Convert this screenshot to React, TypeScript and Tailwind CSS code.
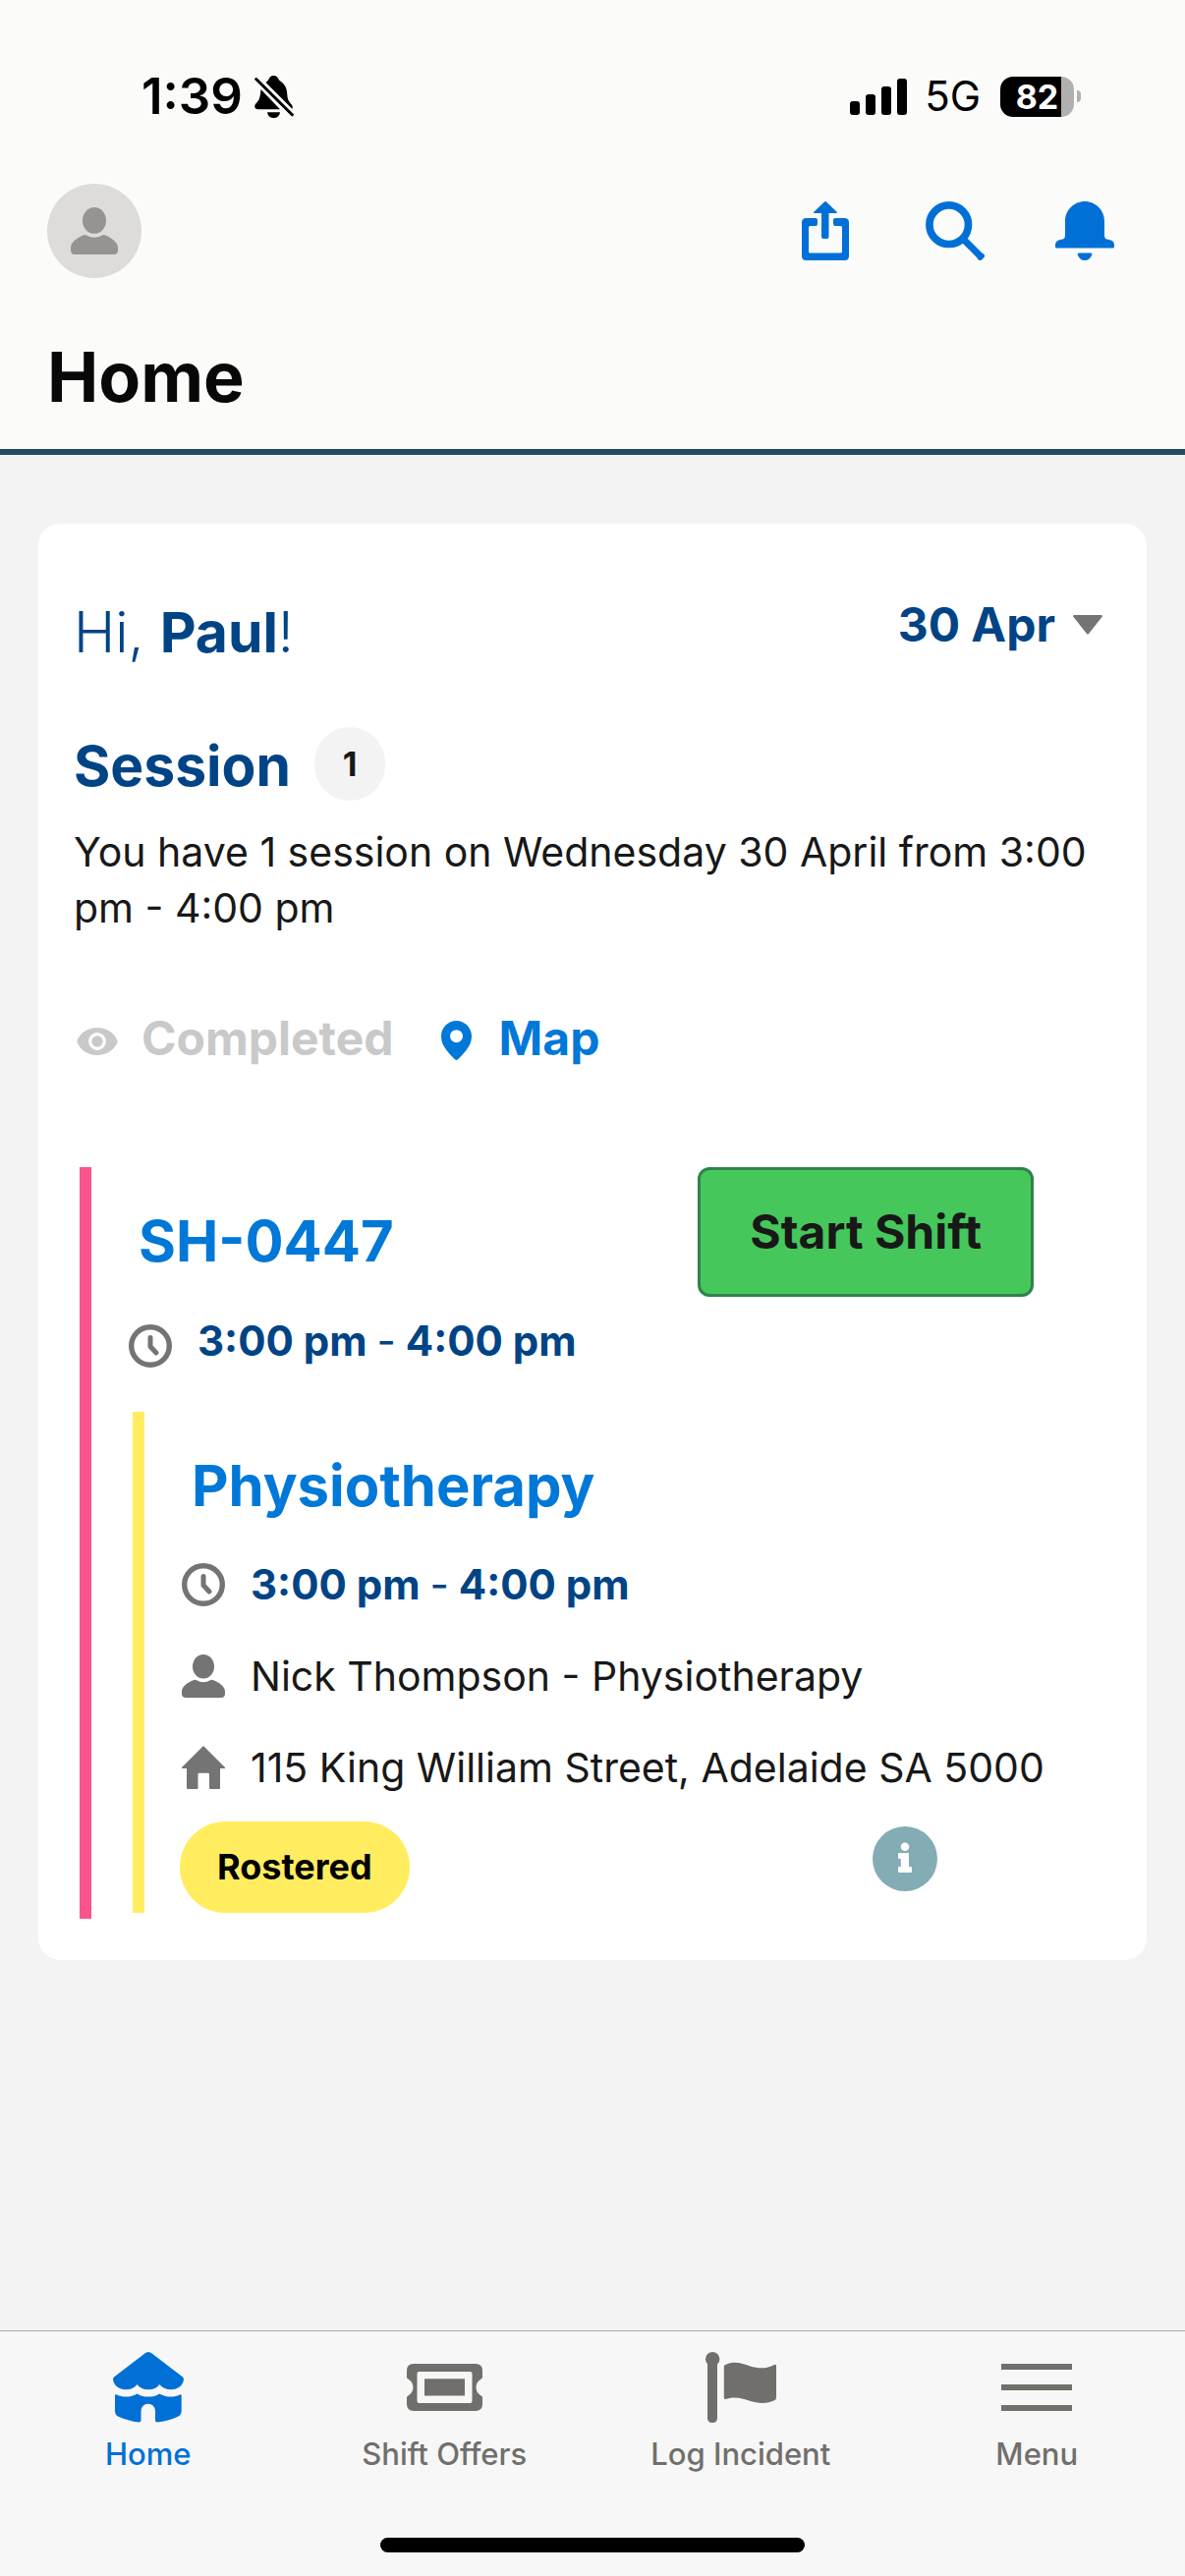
import React, { useState } from 'react';

const detailClass = 'text-[41px] leading-11 text-[#181818]';
const timeClass = 'text-[42px] font-bold text-[#014486]';
const linkTitleClass = 'text-[58px] leading-19 font-bold text-[#0078d8]';

type IconProps = { className?: string };

const BellOffIcon = () => (
  <svg viewBox="0 0 40 43" className="h-[43px] w-10" fill="currentColor">
    <path d="M11.5 7C13 5.5 14 5.2 14.6 3.6C15.3 1.2 17 0 19.5 0S23.700 1.200 24.500 3.600C25 5 26 5.300 27.500 6.500C32 10 33 14 33.300 19C33.600 24 34.500 25.500 36.500 28C38.500 30.300 39.500 32 38.300 33.800Z" />
    <path d="M6.500 14L26 34.200H3.500C0 34.200 -0.800 30.500 1.500 28.300C5 25 5.800 22 6.500 14Z" />
    <path d="M13 37.200H26C25.500 41 23 43 19.500 43S13.500 41 13 37.200Z" />
    <path d="M1.700 3.500L38.300 39.800" stroke="currentColor" strokeWidth="3" strokeLinecap="round" />
  </svg>
);

const SignalIcon = () => (
  <svg viewBox="0 0 58 37" className="h-[37px] w-[58px]" fill="currentColor">
    <rect x="0" y="23" width="10" height="14" rx="3" />
    <rect x="16" y="16" width="10" height="21" rx="3" />
    <rect x="32" y="8" width="10" height="29" rx="3" />
    <rect x="48" y="0" width="10" height="37" rx="3" />
  </svg>
);

const PersonIcon: React.FC<IconProps> = ({ className }) => (
  <svg viewBox="0 0 48 48" className={className} fill="currentColor">
    <ellipse cx="24" cy="13.400" rx="12" ry="13.400" />
    <path d="M13.500 28.300Q15 27.600 16.500 28.700Q24 33 31.500 28.700Q33 27.600 34.500 28.300C42 31 48 36 48 41V43.500Q48 48 43.500 48H4.500Q0 48 0 43.500V41C0 36 6 31 13.500 28.300Z" />
  </svg>
);

const ShareIcon = () => (
  <svg viewBox="-6 0 60 60" className="size-15" fill="currentColor">
    <path d="M4.500 17H14Q16 17 16 19V22.500Q16 25 14 25H8.500Q7 25 7 26.500V51Q7 52.500 8.500 52.500H39.500Q41 52.500 41 51V26.500Q41 25 39.500 25H34Q32 25 32 22.500V19Q32 17 34 17H43.500Q48 17 48 21.500V55.500Q48 60 43.500 60H4.500Q0 60 0 55.500V21.500Q0 17 4.500 17Z" />
    <path d="M23 0.500Q24 -0.500 25 0.500L35.500 10.500Q36.500 12 35 12H27.500V36Q27.500 38 25.500 38H22Q20 38 20 36V12H13Q11.500 12 12.500 10.500Z" />
  </svg>
);

const SearchIcon = () => (
  <svg viewBox="0 0 60 60" className="size-15" fill="none" stroke="currentColor">
    <circle cx="23.700" cy="23.700" r="19.800" strokeWidth="7.700" />
    <path d="M38 38L57 57" strokeWidth="7" />
    <path d="M55.500 57.500L57.500 55.500" strokeWidth="5" strokeLinecap="round" />
  </svg>
);

const BellIcon = () => (
  <svg viewBox="0 0 60 60" className="size-15" fill="currentColor">
    <path d="M30 0C41 0 50 9 50 20V34.500Q50 38.700 54 38.700Q60 39.500 60 44.500V46Q60 47.500 58.500 47.500H1.500Q0 47.500 0 46V44.500Q0 39.500 6 38.700Q10 38.700 10 34.500V20C10 9 19 0 30 0Z" />
    <path d="M24 52.500H36Q37.800 52.500 37.200 54.500C36 58 33.500 60 30 60S24 58 22.800 54.500Q22.200 52.500 24 52.500Z" />
  </svg>
);

const EyeIcon = () => (
  <svg viewBox="0 -10 42 42" className="size-[42px]">
    <path fill="currentColor" d="M0.500 13C4 5 11.500 0 21 0S38 5 41.500 13Q42 14 41.500 15C38 23 30.500 28 21 28S4 23 0.500 15Q0 14 0.500 13Z" />
    <circle cx="21" cy="14" r="7.300" fill="none" stroke="#fff" strokeWidth="3.200" />
  </svg>
);

const PinIcon = () => (
  <svg viewBox="0 -4 31 44" className="h-11 w-[31px]" fill="currentColor">
    <path fillRule="evenodd" d="M15.500 0C24 0 31 7 31 15.700C31 26 23 33 17 39.300Q15.500 40.700 14 39.300C8 33 0 26 0 15.700C0 7 7 0 15.500 0ZM15.500 9.200A6.500 6.500 0 1 0 15.500 22.200A6.500 6.500 0 1 0 15.500 9.200Z" />
  </svg>
);

const ClockIcon: React.FC<IconProps> = ({ className }) => (
  <svg viewBox="0 0 44 44" className={className} fill="none" stroke="currentColor">
    <circle cx="22" cy="22" r="19.300" strokeWidth="5.400" />
    <path d="M22 13.500V22.500L28 29" strokeWidth="5" strokeLinecap="round" strokeLinejoin="round" />
  </svg>
);

const HouseIcon: React.FC<IconProps> = ({ className }) => (
  <svg viewBox="0 0 44 44" className={className} fill="currentColor">
    <path d="M22 0L44 22V23H39V43Q39 44 38 44H29Q28 44 28 43V28.500Q28 27.700 27 27.700H17.500Q16.500 27.700 16.500 28.500V43Q16.500 44 15.500 44H6Q5 44 5 43V23H0V22Z" />
  </svg>
);

const InfoIcon = () => (
  <svg viewBox="0 0 66 66" className="size-[66px]">
    <circle cx="33" cy="33" r="33" fill="#83acb4" />
    <circle cx="33" cy="20.700" r="4.300" fill="#fff" />
    <path fill="#fff" d="M27 27H36Q37 27 37 28V41H39Q40 41 40 42V46Q40 47 39 47H27Q26 47 26 46V42Q26 41 27 41H28.800V33H27Q26 33 26 32V28Q26 27 27 27Z" />
  </svg>
);

const HomeTabIcon = () => (
  <svg viewBox="0 0 72 72" className="size-18" fill="currentColor">
    <path d="M32 1.800Q36 -1.600 40 1.800L71 25.500Q72 26.500 72 28C71 34 66 38.300 59.500 38.300C54.500 38.300 50 36.500 47.300 33C45 36.500 41 38.300 36 38.300C31 38.300 27 36.500 24.600 33C22 36.500 18 38.300 13 38.300C6 38.300 1 34 0 28Q0 26.500 1 25.500Z" />
    <path d="M2 44Q2 42.800 4 43.500C7 45 10 45.600 13 45.600C17.500 45.600 21.500 44.500 24.600 42.500C28 44.800 32 45.600 36 45.600C40 45.600 44 44.800 47.300 42.500C50.500 44.500 55 45.600 59 45.600C62 45.600 65 45 68 43.500Q69.700 42.800 69.700 44V60Q69.700 64 66 65.700Q56 70.500 45 71.500Q43 71.500 43 69.500V60A7.250 7.250 0 0 0 28.500 60V69.500Q28.500 71.500 26.500 71.500Q15 70 5.500 65.700Q2 64 2 60Z" />
  </svg>
);

const TicketIcon = () => (
  <svg viewBox="0 0 77 72" className="h-18 w-[77px]" fill="currentColor">
    <path fillRule="evenodd" d="M7 12H70Q77 12 77 19V25.500Q77 26.700 76 27.300C68.700 31 68.700 41 76 44.700Q77 45.300 77 46.500V53Q77 60 70 60H7Q0 60 0 53V46.500Q0 45.300 1 44.700C8.300 41 8.300 31 1 27.300Q0 26.700 0 25.500V19Q0 12 7 12ZM12.500 20Q10.500 20 10.500 22V50Q10.500 52 12.500 52H64.500Q66.500 52 66.500 50V22Q66.500 20 64.500 20Z" />
    <rect x="18" y="27.300" width="41" height="17.200" rx="0.500" />
  </svg>
);

const FlagIcon = () => (
  <svg viewBox="0 0 72 72" className="size-18" fill="currentColor">
    <circle cx="7.200" cy="7.200" r="7.200" />
    <rect x="2" y="7" width="10" height="65" rx="4.500" />
    <path d="M18.800 15Q18.800 13.500 20 13C30 8.500 38 12 45 14.200C54 17 62 17.500 70 13Q72 12 72 14V46.500Q72 48 71 48.800C62 54 52 52 45 49.800C37 47 30 45 21 48Q18.800 48.300 18.800 46.500Z" />
  </svg>
);

const MenuIcon = () => (
  <svg viewBox="0 0 72 72" className="size-18" fill="currentColor">
    <rect y="12" width="72" height="6" />
    <rect y="33" width="72" height="6" />
    <rect y="54" width="72" height="6" />
  </svg>
);

const tabs = [
  { label: 'Home', icon: <HomeTabIcon /> },
  { label: 'Shift Offers', icon: <TicketIcon /> },
  { label: 'Log Incident', icon: <FlagIcon /> },
  { label: 'Menu', icon: <MenuIcon /> },
];

const StatusBar = () => (
  <div className="flex h-32 items-center justify-between pt-17 pr-[106px] pl-36 text-black">
    <div className="flex items-center gap-3">
      <span className="text-[51px] leading-15 font-semibold">1:39</span>
      <BellOffIcon />
    </div>
    <div className="flex items-center">
      <SignalIcon />
      <span className="ml-[18px] text-[42px] leading-15">5G</span>
      <div className="ml-5 flex h-[41px] w-[75px] items-center justify-center rounded-[13px] bg-[linear-gradient(to_right,#000_83%,#b0b0ae_83%)] text-[34px] font-bold text-white">
        82
      </div>
      <div className="ml-[3px] h-3 w-1 rounded-r-full bg-[#b0b0ae]" />
    </div>
  </div>
);

const TimeRange = () => (
  <>
    3:00 pm <span className="font-normal">-</span> 4:00 pm
  </>
);

const App: React.FC = () => {
  const [activeTab, setActiveTab] = useState('Home');

  return (
    <div className="flex min-h-screen flex-col bg-[#f3f3f3] font-[Inter,'Liberation_Sans',sans-serif]">
      {/* Header */}
      <header className="border-b-6 border-[#234b5e] bg-[#fbfbf9]">
        <StatusBar />
        <div className="mt-[59px] flex items-center justify-between pr-18 pl-12">
          <button type="button" aria-label="Profile" className="flex size-24 items-center justify-center rounded-full bg-[#dddcda] text-[#969492]">
            <PersonIcon className="size-12" />
          </button>
          <div className="flex gap-18 text-[#0070d6]">
            <button type="button" aria-label="Share"><ShareIcon /></button>
            <button type="button" aria-label="Search"><SearchIcon /></button>
            <button type="button" aria-label="Notifications"><BellIcon /></button>
          </div>
        </div>
        <h1 className="mt-[59px] px-12 pb-[31px] text-[70px] leading-21 font-bold text-[#080808]">Home</h1>
      </header>

      {/* Day card */}
      <main className="flex-1 px-[39px] pt-[70px] pb-12">
        <section className="rounded-[22px] bg-white pt-[73px] pb-[42px]">
          <div className="flex items-start justify-between pr-[45px] pl-9 text-[#014486]">
            <h2 className="text-[57px] leading-19 font-light">
              Hi, <span className="font-bold">Paul</span>!
            </h2>
            <button type="button" className="flex items-center gap-[18px] text-[48px] leading-15 font-bold">
              30 Apr
              <svg viewBox="0 0 30 20" className="h-5 w-[30px]" fill="#747474">
                <path d="M1 0H29Q30.500 0.500 29.500 2L16 19Q15 20.500 14 19L0.500 2Q-0.500 0.500 1 0Z" />
              </svg>
            </button>
          </div>

          <div className="mt-[58px] flex items-end gap-6 pl-9">
            <h2 className="text-[57px] leading-[70px] font-bold text-[#014486]">Session</h2>
            <span className="flex h-[75px] w-18 items-center justify-center rounded-full bg-[#f3f3f3] text-[34px] font-bold text-[#181818]">
              1
            </span>
          </div>
          <p className="mt-6 px-9 text-[41px] leading-[57px] text-[#181818]">
            You have 1 session on Wednesday 30 April from 3:00 pm - 4:00 pm
          </p>

          <div className="mt-[74px] flex items-center gap-12 pl-[39px] text-[48px] leading-15 font-bold">
            <button type="button" disabled className="flex items-center gap-6 text-[#c9c9c9]">
              <EyeIcon />
              Completed
            </button>
            <button type="button" className="flex items-center gap-7 text-[#0078d8]">
              <PinIcon />
              Map
            </button>
          </div>

          {/* Shift */}
          <article className="mt-[101px] ml-[42px] border-l-12 border-[#fb548a] pb-1.5">
            <div className="flex items-start justify-between pr-[115px] pl-12">
              <h3 className={linkTitleClass + ' mt-[37px]'}>
                <a href="#shift">SH-0447</a>
              </h3>
              <button
                type="button"
                className="h-33 rounded-xl border-3 border-[#2e844a] bg-[#46c75c] px-[50px] text-[48px] font-bold text-[#181818]"
              >
                Start Shift
              </button>
            </div>
            <div className="mt-[18px] flex items-end gap-[26px] pl-[38px]">
              <ClockIcon className="size-11 text-[#747474]" />
              <span className={timeClass + ' leading-[54px]'}><TimeRange /></span>
            </div>

            {/* Session inside the shift */}
            <div className="mt-[45px] ml-[42px] border-l-12 border-[#ffed5f] pt-[37px]">
              <h4 className={linkTitleClass + ' pl-12'}>
                <a href="#session">Physiotherapy</a>
              </h4>
              <ul className="mt-[41px] flex flex-col gap-[49px] pl-[38px]">
                <li className="flex items-center gap-[26px]">
                  <ClockIcon className="size-11 text-[#747474]" />
                  <span className={timeClass + ' leading-11'}><TimeRange /></span>
                </li>
                <li className="flex items-center gap-[26px]">
                  <PersonIcon className="size-11 text-[#747474]" />
                  <span className={detailClass}>Nick Thompson - Physiotherapy</span>
                </li>
                <li className="flex items-center gap-[26px]">
                  <HouseIcon className="size-11 text-[#747474]" />
                  <span className={detailClass}>115 King William Street, Adelaide SA 5000</span>
                </li>
              </ul>
              <div className="mt-[33px] flex items-start justify-between pr-[213px] pl-9">
                <span className="rounded-full bg-[#ffed5f] px-[38px] text-[36px] leading-[93px] font-bold text-black">Rostered</span>
                <button type="button" aria-label="Session info" className="flex h-19 items-center">
                  <InfoIcon />
                </button>
              </div>
            </div>
          </article>
        </section>
      </main>

      {/* Tab bar */}
      <nav className="border-t border-[#a9a9a9] bg-[#f7f7f7] pt-[21px] pb-6">
        <div className="grid grid-cols-4">
          {tabs.map(({ label, icon }) => (
            <a
              key={label}
              href="#"
              onClick={() => setActiveTab(label)}
              className={`flex flex-col items-center gap-3.5 text-[31px] leading-9 font-medium ${
                activeTab === label ? 'text-[#0070d6]' : 'text-[#706f6b]'
              }`}
            >
              {icon}
              {label}
            </a>
          ))}
        </div>
        <div className="mx-auto mt-[67px] h-[15px] w-[432px] rounded-full bg-black" />
      </nav>
    </div>
  );
};

export default App;
